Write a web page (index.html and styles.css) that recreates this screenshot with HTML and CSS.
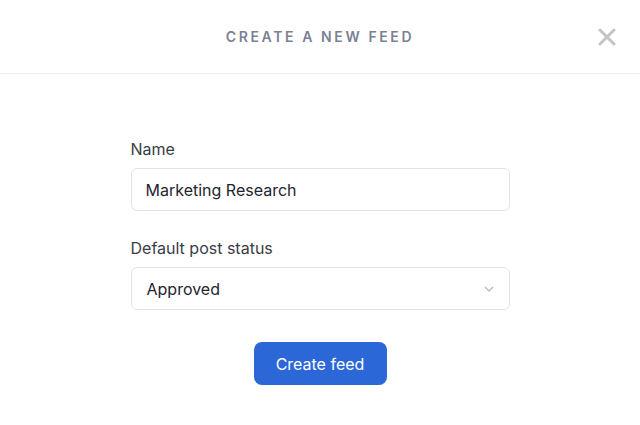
FILE: index.html
```html
<!DOCTYPE html>
<html lang="en">
<head>
    <meta charset="UTF-8">
    <title>Create a new feed</title>
    <link rel="stylesheet" href="styles.css">
</head>
<body>
    <div class="modal">
        <div class="modal-header">
            <h1>Create a new feed</h1>
            <button class="close" aria-label="Close">
                <svg width="18" height="18" viewBox="0 0 18 18"><path d="M2 2L16 16M16 2L2 16" stroke="#c4c4c4" stroke-width="3" stroke-linecap="round"/></svg>
            </button>
        </div>

        <form class="feed-form">
            <div class="input-group">
                <label for="name">Name</label>
                <input type="text" id="name" value="Marketing Research">
            </div>

            <div class="input-group">
                <label for="status">Default post status</label>
                <div class="select">
                    <span>Approved</span>
                    <svg width="10" height="6" viewBox="0 0 10 6"><path d="M1 1L5 5L9 1" fill="none" stroke="#b5b5b5" stroke-width="1.2"/></svg>
                </div>
            </div>

            <div class="actions">
                <button type="button" class="primary">Create feed</button>
            </div>
        </form>
    </div>
</body>
</html>
```

FILE: styles.css
```css
body {
    margin: 0;
    font-family: Inter, "Liberation Sans", sans-serif;
    background-color: white;
    color: #1f2430;
}

.modal {
    width: 640px;
    height: 425px;
    background-color: white;
}

.modal-header {
    height: 73px;
    border-bottom: 1px solid #ececec;
    display: flex;
    align-items: center;
    justify-content: center;
    position: relative;
}

.modal-header h1 {
    margin: 0;
    font-size: 14px;
    font-weight: 600;
    letter-spacing: 2.6px;
    text-transform: uppercase;
    color: #7a8294;
}

.close {
    position: absolute;
    right: 24px;
    top: 28px;
    background: none;
    border: none;
    padding: 0;
    cursor: pointer;
}

.feed-form {
    width: 379px;
    margin: 0 auto;
    padding-top: 65px;
}

.input-group {
    margin-bottom: 27px;
}

label {
    display: block;
    font-size: 16px;
    color: #3a3d45;
    margin-bottom: 9px;
    line-height: 20px;
}

input, .select {
    width: 100%;
    height: 43px;
    box-sizing: border-box;
    border: 1px solid #e3e3e3;
    border-radius: 6px;
    padding: 0 14px;
    font-family: inherit;
    font-size: 16px;
    color: #1f2430;
}

.select {
    display: flex;
    align-items: center;
    justify-content: space-between;
    padding: 0 15px;
}

.actions {
    display: flex;
    justify-content: center;
    padding-top: 5px;
}

.primary {
    background-color: #2c67d8;
    color: white;
    border: none;
    border-radius: 8px;
    width: 133px;
    height: 43px;
    font-family: inherit;
    font-size: 16px;
    cursor: pointer;
}
```
